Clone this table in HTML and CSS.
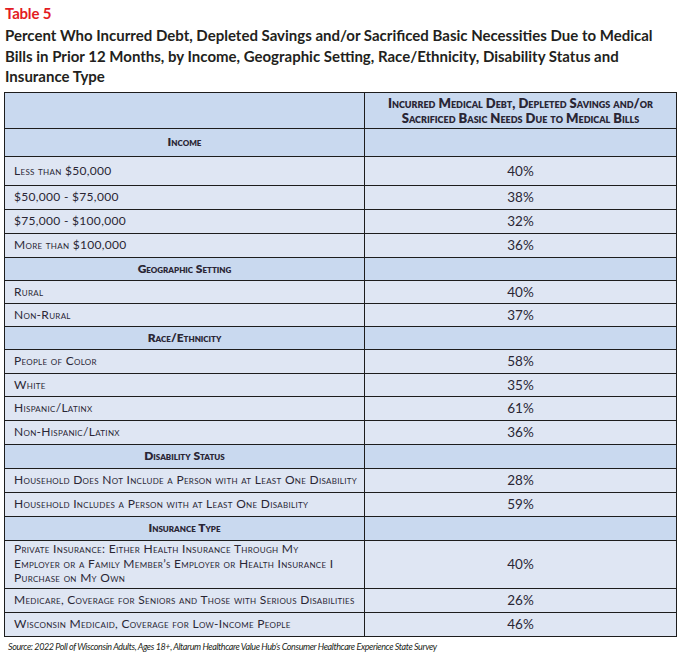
FILE: index.html
```html
<!DOCTYPE html>
<html>
<head>
<meta charset="utf-8">
<link rel="stylesheet" href="styles.css">
</head>
<body>
<div class="page">
  <h2 class="label">Table 5</h2>
  <h1 class="title">Percent Who Incurred Debt, Depleted Savings and/or Sacrificed Basic Necessities Due to Medical Bills in Prior 12 Months, by Income, Geographic Setting, Race/Ethnicity, Disability Status and Insurance Type</h1>
  <table class="data">
    <colgroup><col class="c1"><col class="c2"></colgroup>
    <tr class="head h36"><th></th><th>Incurred Medical Debt, Depleted Savings and/or<br>Sacrificed Basic Needs Due to Medical Bills</th></tr>
    <tr class="sec h28"><th>Income</th><td></td></tr>
    <tr class="h29"><td>Less than $50,000</td><td>40%</td></tr>
    <tr class="h24"><td>$50,000 - $75,000</td><td>38%</td></tr>
    <tr class="h24"><td>$75,000 - $100,000</td><td>32%</td></tr>
    <tr class="h24"><td>More than $100,000</td><td>36%</td></tr>
    <tr class="sec h23"><th>Geographic Setting</th><td></td></tr>
    <tr class="h23"><td>Rural</td><td>40%</td></tr>
    <tr class="h23"><td>Non-Rural</td><td>37%</td></tr>
    <tr class="sec h23"><th>Race/Ethnicity</th><td></td></tr>
    <tr class="h24"><td>People of Color</td><td>58%</td></tr>
    <tr class="h23"><td>White</td><td>35%</td></tr>
    <tr class="h24"><td>Hispanic/Latinx</td><td>61%</td></tr>
    <tr class="h24"><td>Non-Hispanic/Latinx</td><td>36%</td></tr>
    <tr class="sec h24"><th>Disability Status</th><td></td></tr>
    <tr class="h24"><td>Household Does Not Include a Person with at Least One Disability</td><td>28%</td></tr>
    <tr class="h24"><td>Household Includes a Person with at Least One Disability</td><td>59%</td></tr>
    <tr class="sec h24"><th>Insurance Type</th><td></td></tr>
    <tr class="h48"><td class="multi">Private Insurance: Either Health Insurance Through My<br>Employer or a Family Member’s Employer or Health Insurance I<br>Purchase on My Own</td><td>40%</td></tr>
    <tr class="h24"><td>Medicare, Coverage for Seniors and Those with Serious Disabilities</td><td>26%</td></tr>
    <tr class="h24"><td>Wisconsin Medicaid, Coverage for Low-Income People</td><td>46%</td></tr>
  </table>
  <p class="source">Source: 2022 Poll of Wisconsin Adults, Ages 18+, Altarum Healthcare Value Hub’s Consumer Healthcare Experience State Survey</p>
</div>
</body>
</html>
```
FILE: styles.css
```css
html, body {
  margin: 0;
  padding: 0;
  background: #ffffff;
}
.page {
  padding: 3px 7px 0 4px;
  font-family: Lato, "Open Sans", sans-serif;
  color: #231f20;
}
.label {
  margin: 0 0 0 1px;
  font-size: 15px;
  line-height: 20px;
  font-weight: 700;
  color: #e31b23;
  letter-spacing: -0.2px;
}
.title {
  margin: 2px 0 5px 1px;
  font-size: 15px;
  line-height: 20.5px;
  font-weight: 700;
  color: #231f20;
  letter-spacing: 0;
  width: 662px;
}
.data {
  width: 672px;
  border-collapse: collapse;
  table-layout: fixed;
  border: 1.5px solid #1d1d1d;
}
.c1 { width: 360px; }
.c2 { width: 312px; }
.data th, .data td {
  border: 1.5px solid #1d1d1d;
  padding: 0 0 0 9px;
  font-size: 12px;
  line-height: 14px;
  font-variant: small-caps;
  letter-spacing: 0.3px;
  text-align: left;
  vertical-align: middle;
  background: #dfe6f3;
  color: #2a2635;
  white-space: nowrap;
}
.data td + td {
  text-align: center;
  padding: 0;
  font-variant: normal;
  font-size: 13.5px;
  letter-spacing: 0;
}
.data th {
  font-weight: 800;
  text-align: center;
  padding: 0;
  font-size: 12px;
  letter-spacing: 0;
  background: #c9d9ef;
}
.data .sec td, .data .head th {
  background: #c9d9ef;
}
.data .head th {
  font-size: 13px;
  line-height: 15px;
  padding-top: 2px;
}
.data td.multi {
  line-height: 14.5px;
}
.h22 { height: 22px; }
.h23 { height: 23px; }
.h24 { height: 24px; }
.h28 { height: 28px; }
.h29 { height: 29px; }
.h36 { height: 36px; }
.h48 { height: 48px; }
.source {
  margin: 4px 0 0 4px;
  font-size: 9px;
  font-style: italic;
  letter-spacing: -0.4px;
  color: #231f20;
}
```
